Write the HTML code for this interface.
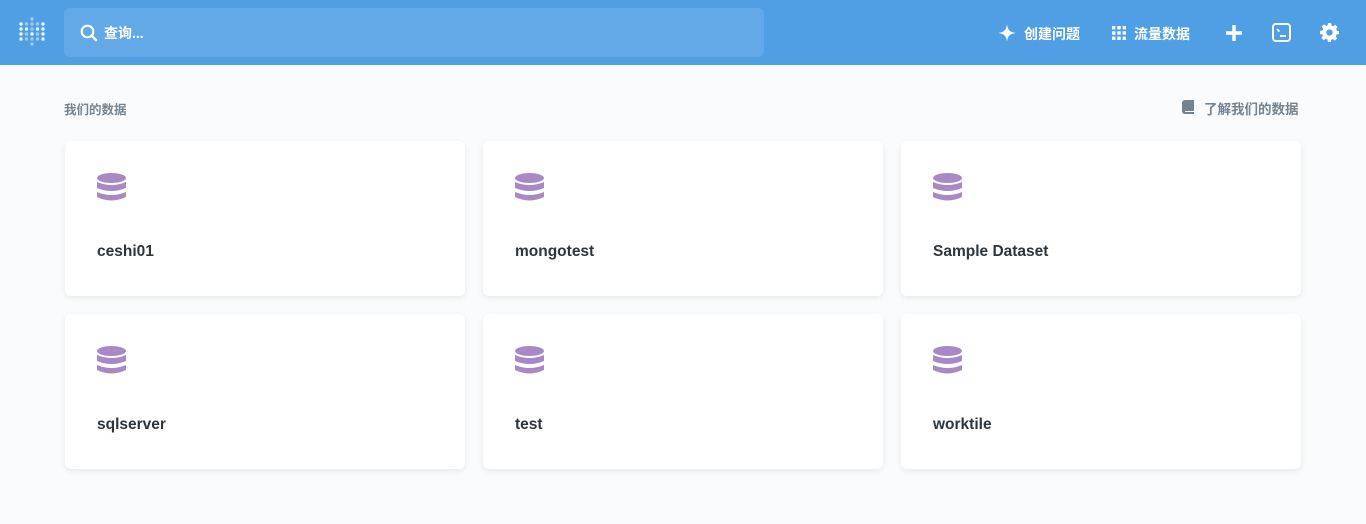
<!DOCTYPE html>
<html><head><meta charset="utf-8"><style>
*{margin:0;padding:0;box-sizing:border-box}
body{width:1366px;height:524px;background:#f9fbfc;font-family:"Liberation Sans","Noto Sans CJK SC",sans-serif;position:relative;overflow:hidden}
.hdr{position:absolute;left:0;top:0;width:1366px;height:65px;background:#509ee3}
.search{position:absolute;left:64px;top:8px;width:700px;height:49px;background:#63a9e7;border-radius:6px}
.search span{position:absolute;left:40px;top:15px;color:#fff;font-weight:bold;font-size:14px}
.nav{position:absolute;top:24px;color:#fff;font-weight:bold;font-size:14px}
.lbl{position:absolute;top:99px;font-size:12.5px;font-weight:bold;color:#74838f}
.card{position:absolute;width:400px;height:155px;background:#fff;border-radius:6px;box-shadow:0 2px 6px rgba(0,0,0,0.08)}
.card svg{position:absolute;left:32px;top:32px}
.card span{position:absolute;left:32px;top:102px;font-size:15.5px;font-weight:bold;color:#2e353b}
</style></head><body>
<div class="hdr">
<svg style="position:absolute;left:18px;top:15px" width="28" height="34" viewBox="0 0 28 34" fill="#fff">
<g opacity="0.9"><circle cx="3" cy="9" r="1.7"/><circle cx="3" cy="14" r="1.7"/><circle cx="3" cy="19" r="1.7"/><circle cx="3" cy="24" r="1.7"/>
<circle cx="25" cy="9" r="1.7"/><circle cx="25" cy="14" r="1.7"/><circle cx="25" cy="19" r="1.7"/><circle cx="25" cy="24" r="1.7"/>
<circle cx="8.5" cy="14" r="1.7"/><circle cx="14" cy="19" r="1.7"/><circle cx="19.5" cy="14" r="1.7"/></g>
<g opacity="0.45"><circle cx="8.5" cy="9" r="1.7"/><circle cx="14" cy="9" r="1.7"/><circle cx="19.5" cy="9" r="1.7"/><circle cx="14" cy="4" r="1.7"/><circle cx="8.5" cy="19" r="1.7"/><circle cx="8.5" cy="24" r="1.7"/><circle cx="14" cy="14" r="1.7"/><circle cx="14" cy="24" r="1.7"/><circle cx="19.5" cy="19" r="1.7"/><circle cx="19.5" cy="24" r="1.7"/><circle cx="14" cy="29" r="1.7"/></g>
</svg>
<div class="search">
<svg style="position:absolute;left:16px;top:16px" width="18" height="18" viewBox="0 0 18 18"><circle cx="7.5" cy="7.5" r="5.8" stroke="#fff" stroke-width="2.2" fill="none"/><path d="M11.8 11.8L16 16" stroke="#fff" stroke-width="2.4" stroke-linecap="round"/></svg>
<span>查询...</span></div>
<svg style="position:absolute;left:998px;top:24px" width="18" height="18" viewBox="0 0 18 18"><path d="M9 0C9.6 6 12 8.4 18 9C12 9.6 9.6 12 9 18C8.4 12 6 9.6 0 9C6 8.4 8.4 6 9 0Z" fill="#fff"/></svg>
<div class="nav" style="left:1024px">创建问题</div>
<svg style="position:absolute;left:1112px;top:26px" width="14" height="14" viewBox="0 0 14 14" fill="#fff"><rect x="0" y="0" width="3.4" height="3.4"/><rect x="5.3" y="0" width="3.4" height="3.4"/><rect x="10.6" y="0" width="3.4" height="3.4"/><rect x="0" y="5.3" width="3.4" height="3.4"/><rect x="5.3" y="5.3" width="3.4" height="3.4"/><rect x="10.6" y="5.3" width="3.4" height="3.4"/><rect x="0" y="10.6" width="3.4" height="3.4"/><rect x="5.3" y="10.6" width="3.4" height="3.4"/><rect x="10.6" y="10.6" width="3.4" height="3.4"/></svg>
<div class="nav" style="left:1134px">流量数据</div>
<svg style="position:absolute;left:1225px;top:24px" width="18" height="18" viewBox="0 0 18 18"><path d="M9 1V17M1 9H17" stroke="#fff" stroke-width="3.4"/></svg>
<svg style="position:absolute;left:1272px;top:23px" width="19" height="19" viewBox="0 0 19 19"><rect x="1" y="1" width="17" height="17" rx="3" stroke="#fff" stroke-width="2" fill="none"/><path d="M5 6L7.5 8.5" stroke="#fff" stroke-width="1.8"/><path d="M8 13H14" stroke="#fff" stroke-width="1.8"/></svg>
<svg style="position:absolute;left:1320px;top:23px" width="19" height="19" viewBox="0 0 24 24"><path fill="#fff" fill-rule="evenodd" d="M10 0h4l.6 3.2 2.2.9 2.7-1.9 2.8 2.8-1.9 2.7.9 2.2L24 10v4l-3.2.6-.9 2.2 1.9 2.7-2.8 2.8-2.7-1.9-2.2.9L14 24h-4l-.6-3.2-2.2-.9-2.7 1.9-2.8-2.8 1.9-2.7-.9-2.2L0 14v-4l3.2-.6.9-2.2-1.9-2.7 2.8-2.8 2.7 1.9 2.2-.9zM12 8a4 4 0 100 8 4 4 0 100-8z"/></svg>
</div>
<div class="lbl" style="left:64px">我们的数据</div>
<svg style="position:absolute;left:1182px;top:100px" width="13" height="14" viewBox="0 0 13 14"><path d="M3 0H12V14H3A3 3 0 010 11V3A3 3 0 013 0Z" fill="#74838f"/><path d="M3 11.5H12" stroke="#f9fbfc" stroke-width="1"/></svg>
<div class="lbl" style="left:1204px;font-size:13.5px;top:98px">了解我们的数据</div>

<div class="card" style="left:65px;top:141px"><svg width="29" height="30" viewBox="0 0 29 30" fill="#a989c5"><ellipse cx="14.5" cy="5" rx="14.5" ry="5"/><path d="M0 9Q14.5 15 29 9V15Q14.5 21 0 15Z"/><path d="M0 19Q14.5 25 29 19V24Q14.5 31 0 24Z"/></svg><span>ceshi01</span></div>
<div class="card" style="left:483px;top:141px"><svg width="29" height="30" viewBox="0 0 29 30" fill="#a989c5"><ellipse cx="14.5" cy="5" rx="14.5" ry="5"/><path d="M0 9Q14.5 15 29 9V15Q14.5 21 0 15Z"/><path d="M0 19Q14.5 25 29 19V24Q14.5 31 0 24Z"/></svg><span>mongotest</span></div>
<div class="card" style="left:901px;top:141px"><svg width="29" height="30" viewBox="0 0 29 30" fill="#a989c5"><ellipse cx="14.5" cy="5" rx="14.5" ry="5"/><path d="M0 9Q14.5 15 29 9V15Q14.5 21 0 15Z"/><path d="M0 19Q14.5 25 29 19V24Q14.5 31 0 24Z"/></svg><span>Sample Dataset</span></div>
<div class="card" style="left:65px;top:314px"><svg width="29" height="30" viewBox="0 0 29 30" fill="#a989c5"><ellipse cx="14.5" cy="5" rx="14.5" ry="5"/><path d="M0 9Q14.5 15 29 9V15Q14.5 21 0 15Z"/><path d="M0 19Q14.5 25 29 19V24Q14.5 31 0 24Z"/></svg><span>sqlserver</span></div>
<div class="card" style="left:483px;top:314px"><svg width="29" height="30" viewBox="0 0 29 30" fill="#a989c5"><ellipse cx="14.5" cy="5" rx="14.5" ry="5"/><path d="M0 9Q14.5 15 29 9V15Q14.5 21 0 15Z"/><path d="M0 19Q14.5 25 29 19V24Q14.5 31 0 24Z"/></svg><span>test</span></div>
<div class="card" style="left:901px;top:314px"><svg width="29" height="30" viewBox="0 0 29 30" fill="#a989c5"><ellipse cx="14.5" cy="5" rx="14.5" ry="5"/><path d="M0 9Q14.5 15 29 9V15Q14.5 21 0 15Z"/><path d="M0 19Q14.5 25 29 19V24Q14.5 31 0 24Z"/></svg><span>worktile</span></div>
</body></html>
